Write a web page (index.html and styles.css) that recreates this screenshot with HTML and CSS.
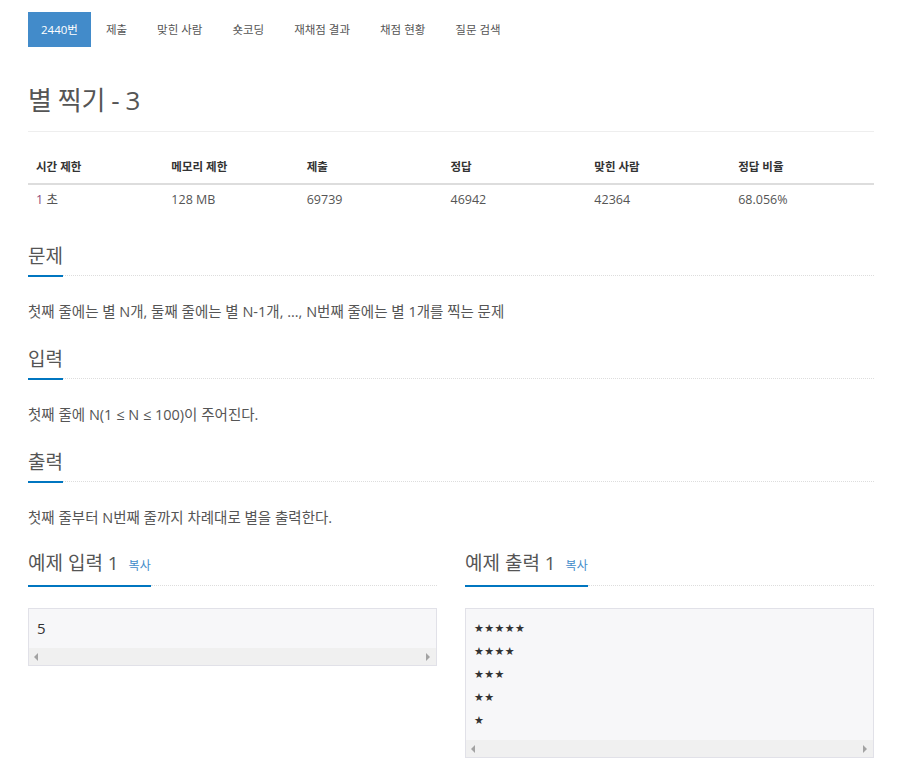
FILE: index.html
```html
<!DOCTYPE html>
<html lang="ko">
<head>
<meta charset="utf-8">
<title>별 찍기 - 3</title>
<link rel="stylesheet" href="styles.css">
</head>
<body>
<div class="container">
  <ul class="tabs">
    <li class="active"><a>2440번</a></li>
    <li><a>제출</a></li>
    <li><a>맞힌 사람</a></li>
    <li><a>숏코딩</a></li>
    <li><a>재채점 결과</a></li>
    <li><a>채점 현황</a></li>
    <li><a>질문 검색</a></li>
  </ul>

  <h1 class="page-title">별 찍기 - 3</h1>

  <table class="info">
    <thead>
      <tr><th>시간 제한</th><th>메모리 제한</th><th>제출</th><th>정답</th><th>맞힌 사람</th><th>정답 비율</th></tr>
    </thead>
    <tbody>
      <tr><td><span class="num">1</span> 초</td><td>128 MB</td><td>69739</td><td>46942</td><td>42364</td><td>68.056%</td></tr>
    </tbody>
  </table>

  <section class="section">
    <div class="headline"><h2>문제</h2></div>
    <p>첫째 줄에는 별 N개, 둘째 줄에는 별 N-1개, ..., N번째 줄에는 별 1개를 찍는 문제</p>
  </section>

  <section class="section">
    <div class="headline"><h2>입력</h2></div>
    <p>첫째 줄에 N(1 ≤ N ≤ 100)이 주어진다.</p>
  </section>

  <section class="section">
    <div class="headline"><h2>출력</h2></div>
    <p>첫째 줄부터 N번째 줄까지 차례대로 별을 출력한다.</p>
  </section>

  <div class="samples">
    <section class="section">
      <div class="headline"><h2>예제 입력 1 <a class="copy">복사</a></h2></div>
      <div class="sample-box">
        <pre class="sample">5</pre>
        <div class="hscroll"><span class="arrow left"></span><span class="arrow right"></span></div>
      </div>
    </section>
    <section class="section">
      <div class="headline"><h2>예제 출력 1 <a class="copy">복사</a></h2></div>
      <div class="sample-box">
        <pre class="sample stars">★★★★★
★★★★
★★★
★★
★</pre>
        <div class="hscroll"><span class="arrow left"></span><span class="arrow right"></span></div>
      </div>
    </section>
  </div>
</div>
</body>
</html>
```

FILE: styles.css
```css
* { box-sizing: border-box; }

body {
  margin: 0;
  background: #fff;
  color: #555;
  font-family: "Open Sans", "Noto Sans CJK KR", sans-serif;
}

.container {
  padding: 12px 28px 0;
}

.tabs {
  display: flex;
  list-style: none;
  margin: 0;
  padding: 0;
}

.tabs a {
  display: block;
  padding: 0 15px;
  line-height: 35px;
  font-size: 11.5px;
  color: #555;
}

.tabs .active a {
  padding: 0 13px;
  background: #428bca;
  color: #fff;
}

.page-title {
  margin: 37px 0 0;
  padding-bottom: 15px;
  border-bottom: 1px solid #eee;
  font-size: 26px;
  line-height: 32px;
  letter-spacing: -0.4px;
  font-weight: 400;
  color: #555;
}

.info {
  width: 100%;
  margin-top: 18px;
  border-collapse: collapse;
  table-layout: fixed;
}

.info th:nth-child(1),
.info th:nth-child(2) { width: 16%; }

.info th {
  padding: 8px 8px 7px;
  line-height: 18px;
  font-size: 11.5px;
  font-weight: 700;
  color: #333;
  text-align: left;
  border-bottom: 2px solid #ddd;
}

.info td {
  padding: 6px 8px 8px;
  line-height: 18px;
  font-size: 12.5px;
  color: #555;
}

.info .num { color: #8e4a7b; }

.section { margin-top: 25px; }

.info + .section { margin-top: 27px; }

.headline {
  display: flex;
  align-items: flex-end;
}

.headline::after {
  content: "";
  flex: 1;
  border-bottom: 1px dotted #ddd;
  margin-bottom: 1px;
}

.headline h2 {
  margin: 0;
  padding-bottom: 7px;
  border-bottom: 2px solid #0076c0;
  font-size: 19px;
  line-height: 24px;
  font-weight: 400;
  color: #555;
}

.copy {
  margin-left: 5px;
  font-size: 12px;
  color: #428bca;
}

.section p {
  margin: 25px 0 0;
  font-size: 14.5px;
  line-height: 20px;
  color: #555;
}

.samples {
  display: grid;
  grid-template-columns: 1fr 1fr;
  column-gap: 28px;
}

.samples .section { margin-top: 23px; }

.sample-box {
  margin-top: 21px;
  border: 1px solid #e1e1e8;
  background: #f7f7f9;
}

.sample {
  margin: 0;
  padding: 8px 8px;
  font-family: "Open Sans", sans-serif;
  font-size: 15px;
  line-height: 23px;
  color: #333;
}

.stars {
  font-family: "DejaVu Sans", sans-serif;
  font-size: 11px;
  letter-spacing: 0.4px;
}

.hscroll {
  display: flex;
  justify-content: space-between;
  align-items: center;
  height: 17px;
  padding: 0 6px 0 5px;
  background: #f0f0f0;
}

.arrow {
  width: 0;
  height: 0;
  border-top: 4px solid transparent;
  border-bottom: 4px solid transparent;
}

.arrow.left { border-right: 4px solid #a3a3a3; }
.arrow.right { border-left: 4px solid #a3a3a3; }
```
